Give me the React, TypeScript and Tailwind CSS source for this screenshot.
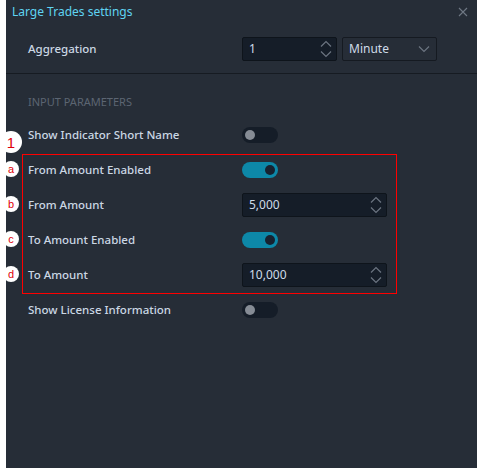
import React from 'react';

const font = { fontFamily: '"Noto Sans", "Open Sans", sans-serif' };

const Spinner: React.FC = () => (
  <svg width="12" height="18" viewBox="0 0 12 18" fill="none" stroke="#6b7480" strokeWidth="1.2">
    <path d="M1 6.5 L6 1.5 L11 6.5" />
    <path d="M1 11.5 L6 16.5 L11 11.5" />
  </svg>
);

const NumberInput: React.FC<{ value: string; w: string }> = ({ value, w }) => (
  <div className={`${w} h-6 flex items-center justify-between bg-[#151d28] border border-[#0e141b] rounded-[2px] pl-[6px] pr-[4px]`}>
    <span className="text-[12px] text-[#cfdbe8]">{value}</span>
    <Spinner />
  </div>
);

const Toggle: React.FC<{ on?: boolean }> = ({ on }) => (
  <div
    className={`w-9 h-4 rounded-full flex items-center px-[3px] ${
      on ? 'bg-[#0d88a8] justify-end' : 'bg-[#151d28] justify-start'
    }`}
  >
    <div className={`w-[10px] h-[10px] rounded-full ${on ? 'bg-[#172230]' : 'bg-[#868c95]'}`} />
  </div>
);

const Row: React.FC<{ label: string; children: React.ReactNode }> = ({ label, children }) => (
  <div className="h-[35px] flex items-center">
    <div className="w-[214px] text-[11.5px] font-medium text-[#cbd7e4]">{label}</div>
    {children}
  </div>
);

const Badge: React.FC<{ ch: string; y: string; big?: boolean }> = ({ ch, y, big }) => (
  <div
    className={`absolute left-[3px] ${y} ${
      big ? 'w-[22px] h-[22px] -translate-x-[3px] text-[15px]' : 'w-4 h-4 text-[11px]'
    } rounded-full bg-white flex items-center justify-center text-[#e0000a] leading-none`}
    style={{ fontFamily: '"Liberation Sans", Arial, sans-serif' }}
  >
    {ch}
  </div>
);

const App: React.FC = () => {
  return (
    <div className="relative w-[477px] h-[468px] bg-white" style={font}>
      <div className="ml-[6px] h-full bg-[#262d37]">
        {/* Header */}
        <div className="h-6 flex items-center justify-between pl-[6px] pr-[9px]">
          <span className="text-[12px] text-[#5fd4f2]">Large Trades settings</span>
          <svg width="10" height="10" viewBox="0 0 10 10" stroke="#6f7884" strokeWidth="1.1">
            <path d="M1 1 L9 9 M9 1 L1 9" />
          </svg>
        </div>

        {/* Aggregation */}
        <div className="pt-[13px] pb-3 border-b border-[#161b22] pl-[22px]">
          <div className="h-6 flex items-center">
            <div className="w-[214px] text-[11.5px] font-medium text-[#cbd7e4]">Aggregation</div>
            <NumberInput value="1" w="w-[95px]" />
            <div className="ml-[5px] w-[95px] h-6 flex items-center justify-between bg-[#262d37] border border-[#151a21] rounded-[2px] pl-[6px] pr-[6px]">
              <span className="text-[12px] text-[#cfdbe8]">Minute</span>
              <svg width="12" height="8" viewBox="0 0 12 8" fill="none" stroke="#6b7480" strokeWidth="1.2">
                <path d="M1 1.5 L6 6.5 L11 1.5" />
              </svg>
            </div>
          </div>
        </div>

        {/* Input parameters */}
        <div className="pl-[22px] pt-5">
          <div className="h-4 mb-[7px] flex items-center text-[11px] text-[#5c6572] uppercase">
            Input Parameters
          </div>
          <Row label="Show Indicator Short Name">
            <Toggle />
          </Row>
          <Row label="From Amount Enabled">
            <Toggle on />
          </Row>
          <Row label="From Amount">
            <NumberInput value="5,000" w="w-[145px]" />
          </Row>
          <Row label="To Amount Enabled">
            <Toggle on />
          </Row>
          <Row label="To Amount">
            <NumberInput value="10,000" w="w-[145px]" />
          </Row>
          <Row label="Show License Information">
            <Toggle />
          </Row>
        </div>
      </div>

      {/* Annotations */}
      <div className="absolute left-[22px] top-[154px] w-[375px] h-[140px] border border-[#ff0000]" />
      <Badge ch="1" y="top-[131px]" big />
      <Badge ch="a" y="top-[161px]" />
      <Badge ch="b" y="top-[196px]" />
      <Badge ch="c" y="top-[231px]" />
      <Badge ch="d" y="top-[266px]" />
    </div>
  );
};

export default App;
